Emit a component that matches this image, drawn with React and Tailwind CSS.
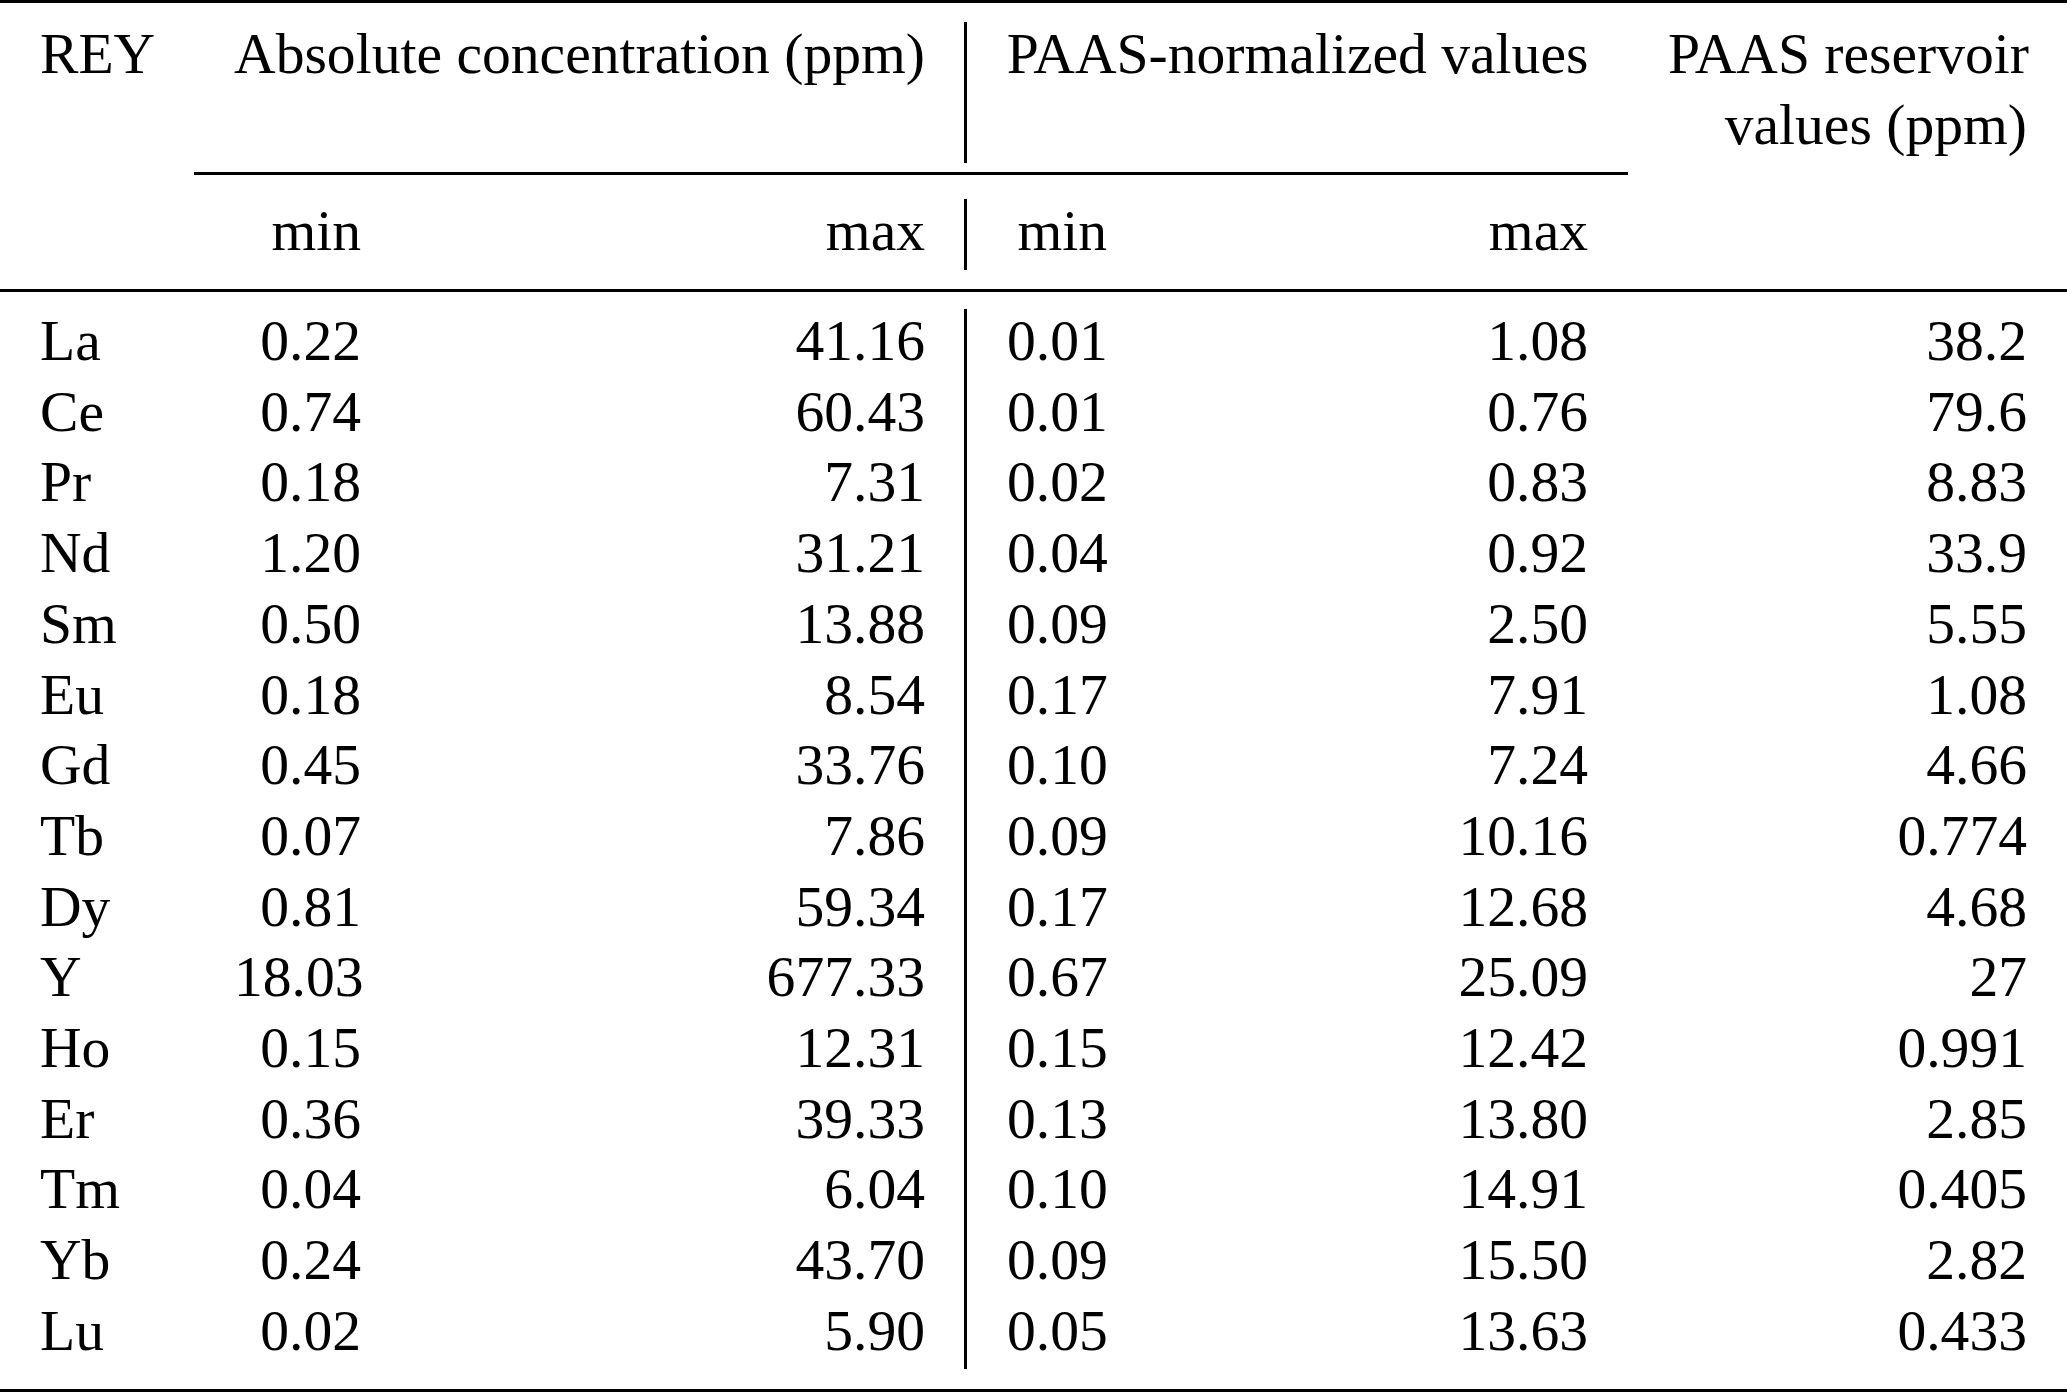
const ROWS = [
  ['La', '0.22', '41.16', '0.01', '1.08', '38.2'],
  ['Ce', '0.74', '60.43', '0.01', '0.76', '79.6'],
  ['Pr', '0.18', '7.31', '0.02', '0.83', '8.83'],
  ['Nd', '1.20', '31.21', '0.04', '0.92', '33.9'],
  ['Sm', '0.50', '13.88', '0.09', '2.50', '5.55'],
  ['Eu', '0.18', '8.54', '0.17', '7.91', '1.08'],
  ['Gd', '0.45', '33.76', '0.10', '7.24', '4.66'],
  ['Tb', '0.07', '7.86', '0.09', '10.16', '0.774'],
  ['Dy', '0.81', '59.34', '0.17', '12.68', '4.68'],
  ['Y', '18.03', '677.33', '0.67', '25.09', '27'],
  ['Ho', '0.15', '12.31', '0.15', '12.42', '0.991'],
  ['Er', '0.36', '39.33', '0.13', '13.80', '2.85'],
  ['Tm', '0.04', '6.04', '0.10', '14.91', '0.405'],
  ['Yb', '0.24', '43.70', '0.09', '15.50', '2.82'],
  ['Lu', '0.02', '5.90', '0.05', '13.63', '0.433']
]

// column tracks: REY | abs min | abs max | paas min | paas max | reservoir
const GRID = 'grid grid-cols-[194px_207px_566px_180px_481px_439px]'
const LINE = 'h-[70.7px] leading-[63px] whitespace-nowrap'

function Rule() {
  return <div className="h-[3px] bg-black" />
}

export default function App() {
  return (
    <div className="w-[2067px] h-[1392px] overflow-hidden bg-white text-black font-['Liberation_Serif','Times_New_Roman',serif] text-[57.6px]">
      <Rule />

      {/* header, first level */}
      <div className={`${GRID} mt-[19px]`}>
        <div className={`${LINE} pl-[40px]`}>REY</div>
        <div className="col-span-2 border-r-[3px] border-black pl-[38px] pr-[39px] text-right">
          <div className={LINE}>Absolute concentration (ppm)</div>
        </div>
        <div className="col-span-2 px-[38px] text-center">
          <div className={LINE}>PAAS-normalized values</div>
        </div>
        <div className="px-[40px] text-right">
          <div className={LINE}>PAAS reservoir</div>
          <div className={LINE}>values (ppm)</div>
        </div>
      </div>

      {/* cmidrule under the two grouped headers */}
      <div className={`${GRID} mt-[9px]`}>
        <div />
        <div className="col-span-4 h-[3px] bg-black" />
      </div>

      {/* header, second level */}
      <div className={`${GRID} mt-[24px] text-right`}>
        <div />
        <div className={`${LINE} px-[40px]`}>min</div>
        <div className={`${LINE} border-r-[3px] border-black pl-[40px] pr-[39px]`}>max</div>
        <div className={`${LINE} px-[40px]`}>min</div>
        <div className={`${LINE} px-[40px]`}>max</div>
        <div />
      </div>

      <div className="mt-[19px]">
        <Rule />
      </div>

      {/* body */}
      <div className={`${GRID} mt-[17px]`}>
        {ROWS.map(r => (
          <div key={r[0]} className="contents">
            <div className={`${LINE} pl-[40px]`}>{r[0]}</div>
            <div className={`${LINE} px-[40px] text-right`}>{r[1]}</div>
            <div className={`${LINE} border-r-[3px] border-black pl-[40px] pr-[39px] text-right`}>{r[2]}</div>
            <div className={`${LINE} px-[40px] text-right`}>{r[3]}</div>
            <div className={`${LINE} px-[40px] text-right`}>{r[4]}</div>
            <div className={`${LINE} px-[40px] text-right`}>{r[5]}</div>
          </div>
        ))}
      </div>

      <div className="mt-[19.5px]">
        <Rule />
      </div>
    </div>
  )
}
